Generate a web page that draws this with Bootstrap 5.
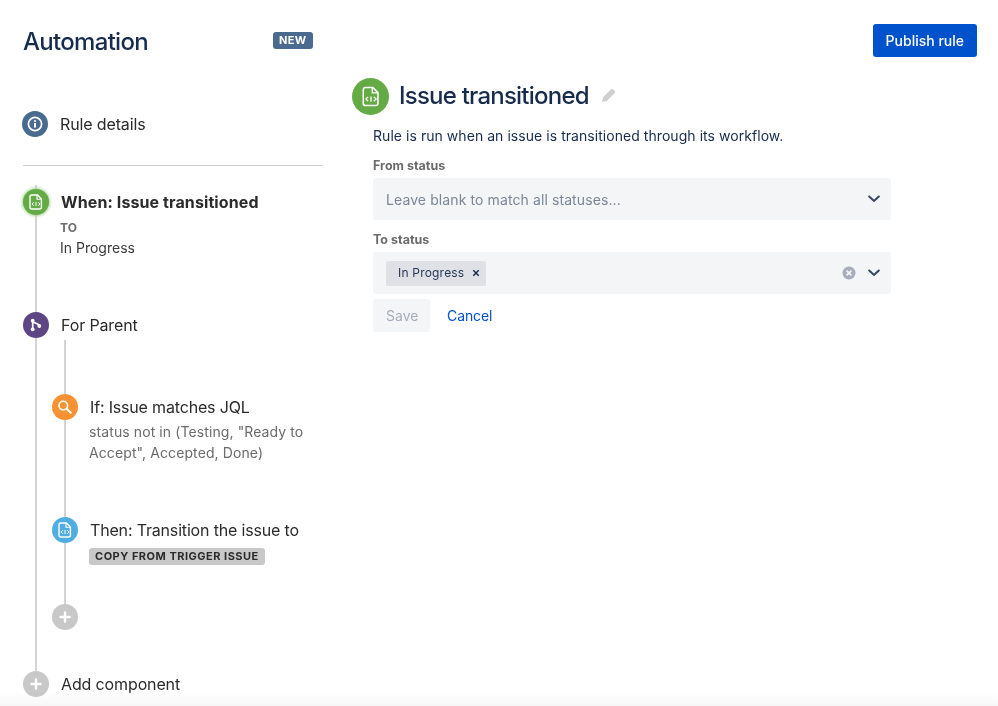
<!doctype html>
<html lang="en">
<head>
<meta charset="utf-8">
<title>Automation</title>
<link rel="stylesheet" href="https://cdn.jsdelivr.net/npm/bootstrap@5.3.0/dist/css/bootstrap.min.css">
<style>
html,body{height:706px;overflow:hidden}
body{font-family:Inter,"Noto Sans",sans-serif;color:#2b2b2b;background:#fff;font-size:14px}
.shell{padding:0 21px 0 23px}
.side{width:300px;flex:none}
.main-pane{margin-left:29px;flex:1;min-width:0}
.page-title{font-size:24px;font-weight:500;color:#172b4d;letter-spacing:-.7px;line-height:28px;margin:2px 0 0}
.new-tag{background:#4a6b8f;color:#fff;font-size:11px;font-weight:700;line-height:17px;padding:0 6.500px;border-radius:3px;letter-spacing:.3px;margin-right:10px}
.head-row{height:27px;margin-top:27px}
.publish{background:#0052cc;color:#fff;font-size:14px;font-weight:500;border:0;border-radius:3px;height:33px;padding:0 13px;margin-top:24px;flex:none}
.publish:hover{background:#0052cc;color:#fff}
.dot{width:26px;height:26px;border-radius:50%;flex:none;display:flex;align-items:center;justify-content:center;position:relative;z-index:1}
.dot svg{display:block}
.c-info{background:#4a6b8f}
.c-green{background:#65ab45;box-shadow:0 0 3px 1px #a9d398}
.c-purple{background:#5e4685}
.c-orange{background:#f79232}
.c-blue{background:#4fade3}
.c-grey{background:#c8c8c8}
.step-name{font-size:16px;line-height:20px}
.ls-a{letter-spacing:-.13px}
.ls-b{letter-spacing:-.17px}
.sub-text{font-size:14px;line-height:21px;color:#6b6b6b;letter-spacing:.1px}
.details{margin-top:57px;margin-left:-1px}
.sep{border:0;border-top:1px solid #ccc;opacity:1;margin:28px 0 23px}
.tree{position:relative}
.tree::before{content:"";position:absolute;left:12px;top:-4px;bottom:13px;width:2px;background:#d4d4d4}
.subtree{position:relative;margin-left:29px;padding-top:56px}
.subtree::before{content:"";position:absolute;left:12px;top:2px;bottom:13px;width:2px;background:#d4d4d4}
.when-meta{padding-left:37px}
.when-title{font-weight:700;margin-left:1px;letter-spacing:.1px}
.to-label{font-size:12px;font-weight:700;color:#6b6b6b;line-height:16px;margin-top:5px}
.plain-line{font-size:14px;line-height:20px;margin-top:2px;color:#3a3a3a}
.for-row{margin-top:54px}
.if-text{padding-left:37px;margin-top:1px}
.then-row{margin-top:54px}
.copy-tag{display:inline-block;background:#c8c8c8;color:#2b2b2b;font-size:11px;font-weight:700;letter-spacing:.5px;border-radius:3px;line-height:17px;padding:0 6px;margin:5px 0 0 37px}
.plus-row{margin-top:39px}
.add-row{margin-top:41px}
.rule-head{margin-top:21px}
.rule-dot{width:37px;height:37px;box-shadow:none;margin-right:10px}
.rule-title{font-size:24px;font-weight:500;color:#172b4d;letter-spacing:-.78px;line-height:34px;margin:-1px 0 0}
.pencil{margin-left:13px;margin-top:-3px}
.rule-body{padding-left:21px;width:539px}
.rule-desc{font-size:14px;line-height:20px;color:#172b4d;margin:11px 0 0;letter-spacing:.05px}
.field-label{font-size:12.500px;font-weight:700;color:#6b6b6b;line-height:16px;margin:0 0 4px}
.field-block{margin-top:12px}
.select-box{height:42px;background:#f4f5f7;border-radius:3px;padding:0 11px 0 13px}
.placeholder-text{font-size:14px;color:#7a869a;letter-spacing:.1px}
.chip{background:#dfe1e6;border-radius:2px;height:25px;font-size:12px;color:#253858;padding:0 6px 0 12px;gap:8px;letter-spacing:.2px}
.action-row{margin-top:5px}
.save-btn{background:#f4f5f7;color:#a5adba;font-size:14px;border:0;border-radius:3px;height:33px;padding:0 13px;width:57px}
.save-btn:disabled{background:#f4f5f7;color:#a5adba;opacity:1}
.cancel-btn{color:#0052cc;font-size:14px;text-decoration:none;padding:0 17px;letter-spacing:-.1px}
.floor{position:fixed;left:0;right:0;bottom:0;height:14px;background:linear-gradient(#ffffff,#f7f7f7);z-index:-1}
</style>
</head>
<body>
<div class="shell d-flex">
  <aside class="side">
    <div class="head-row d-flex align-items-center justify-content-between">
      <h1 class="page-title">Automation</h1>
      <span class="new-tag">NEW</span>
    </div>
    <div class="details d-flex align-items-center">
      <span class="dot c-info"><svg width="16" height="16" viewBox="0 0 16 16" fill="none"><circle cx="8" cy="8" r="6.600" stroke="#fff" stroke-width="1.700"/><rect x="7" y="7" width="2" height="4.600" fill="#fff"/><circle cx="8" cy="5" r="1.100" fill="#fff"/></svg></span>
      <span class="step-name ms-2 ps-1 ls-a">Rule details</span>
    </div>
    <hr class="sep">
    <div class="tree">
      <div class="d-flex align-items-center">
        <span class="dot c-green"><svg width="14" height="16" viewBox="0 0 14 16" fill="none"><path d="M2.600 1h5.900L12.400 5v8.400a1.600 1.600 0 0 1-1.600 1.600H2.600A1.600 1.600 0 0 1 1 13.400V2.600A1.600 1.600 0 0 1 2.600 1z" stroke="#fff" stroke-width="1.400"/><path d="M8 1v4.200h4.200" stroke="#fff" stroke-width="1.100"/><path d="M4.800 8.300L3 10l1.800 1.700M9.200 8.300L11 10l-1.800 1.700M7 8v4" stroke="#fff" stroke-width="1"/></svg></span>
        <span class="step-name ms-2 ps-1 when-title">When: Issue transitioned</span>
      </div>
      <div class="when-meta">
        <div class="to-label">TO</div>
        <div class="plain-line">In Progress</div>
      </div>
      <div class="d-flex align-items-center for-row">
        <span class="dot c-purple"><svg width="16" height="16" viewBox="0 0 16 16" fill="none"><path d="M4.700 3.700v8.600M4.700 3.700c0 3 6.600 2 6.600 5.300" stroke="#fff" stroke-width="1.700"/><circle cx="4.700" cy="3.700" r="1.900" fill="#fff"/><circle cx="4.700" cy="12.300" r="1.900" fill="#fff"/><circle cx="11.300" cy="9" r="1.900" fill="#fff"/></svg></span>
        <span class="step-name ms-2 ps-1 ls-a">For Parent</span>
      </div>
      <div class="subtree">
        <div class="d-flex align-items-center">
          <span class="dot c-orange"><svg width="16" height="16" viewBox="0 0 16 16" fill="none"><circle cx="6.300" cy="6.600" r="4.300" stroke="#fff" stroke-width="1.600"/><path d="M9.800 10l4 3.800" stroke="#fff" stroke-width="2" stroke-linecap="round"/></svg></span>
          <span class="step-name ms-2 ps-1 ls-b">If: Issue matches JQL</span>
        </div>
        <div class="sub-text if-text">status not in (Testing, "Ready to<br>Accept", Accepted, Done)</div>
        <div class="d-flex align-items-center then-row">
          <span class="dot c-blue"><svg width="14" height="16" viewBox="0 0 14 16" fill="none"><path d="M2.600 1h5.900L12.400 5v8.400a1.600 1.600 0 0 1-1.600 1.600H2.600A1.600 1.600 0 0 1 1 13.400V2.600A1.600 1.600 0 0 1 2.600 1z" stroke="#fff" stroke-width="1.400"/><path d="M8 1v4.200h4.200" stroke="#fff" stroke-width="1.100"/><path d="M4.800 8.300L3 10l1.800 1.700M9.200 8.300L11 10l-1.800 1.700M7 8v4" stroke="#fff" stroke-width="1"/></svg></span>
          <span class="step-name ms-2 ps-1 ls-b">Then: Transition the issue to</span>
        </div>
        <span class="copy-tag">COPY FROM TRIGGER ISSUE</span>
        <div class="plus-row">
          <span class="dot c-grey"><svg width="12" height="12" viewBox="0 0 12 12"><path d="M6 1.500v9M1.500 6h9" stroke="#fff" stroke-width="2.400" stroke-linecap="round"/></svg></span>
        </div>
      </div>
      <div class="d-flex align-items-center add-row">
        <span class="dot c-grey"><svg width="12" height="12" viewBox="0 0 12 12"><path d="M6 1.500v9M1.500 6h9" stroke="#fff" stroke-width="2.400" stroke-linecap="round"/></svg></span>
        <span class="step-name ms-2 ps-1 ls-a">Add component</span>
      </div>
    </div>
  </aside>
  <main class="main-pane">
    <div class="d-flex justify-content-end">
      <button type="button" class="btn publish">Publish rule</button>
    </div>
    <div class="d-flex align-items-center rule-head">
      <span class="dot c-green rule-dot"><svg width="18" height="21" viewBox="0 0 14 16" fill="none"><path d="M2.600 1h5.900L12.400 5v8.400a1.600 1.600 0 0 1-1.600 1.600H2.600A1.600 1.600 0 0 1 1 13.400V2.600A1.600 1.600 0 0 1 2.600 1z" stroke="#fff" stroke-width="1.200"/><path d="M8 1v4.200h4.200" stroke="#fff" stroke-width="1"/><path d="M4.800 8.300L3 10l1.800 1.700M9.200 8.300L11 10l-1.800 1.700M7 8v4" stroke="#fff" stroke-width="1"/></svg></span>
      <h2 class="rule-title">Issue transitioned</h2>
      <svg class="pencil" width="14" height="14" viewBox="0 0 14 14"><path d="M0 14l1-4.800 8-8a1.400 1.400 0 0 1 2 0l1.800 1.800a1.400 1.400 0 0 1 0 2l-8 8z" fill="#cfcfcf"/></svg>
    </div>
    <div class="rule-body">
      <p class="rule-desc">Rule is run when an issue is transitioned through its workflow.</p>
      <div class="field-block">
        <div class="field-label">From status</div>
        <div class="select-box d-flex align-items-center justify-content-between">
          <span class="placeholder-text">Leave blank to match all statuses...</span>
          <svg width="12" height="8" viewBox="0 0 12 8" fill="none"><path d="M1.200 1.500L6 6l4.800-4.500" stroke="#344563" stroke-width="2" stroke-linecap="round"/></svg>
        </div>
      </div>
      <div class="field-block">
        <div class="field-label">To status</div>
        <div class="select-box d-flex align-items-center justify-content-between">
          <span class="chip d-inline-flex align-items-center">In Progress<svg width="8" height="8" viewBox="0 0 8 8"><path d="M1.300 1.300l5.400 5.400M6.700 1.300L1.300 6.700" stroke="#172b4d" stroke-width="1.500"/></svg></span>
          <span class="d-flex align-items-center gap-2">
            <svg width="14" height="14" viewBox="0 0 14 14"><circle cx="7" cy="7" r="6.500" fill="#a5adba"/><path d="M4.600 4.600l4.800 4.800M9.400 4.600L4.600 9.400" stroke="#f4f5f7" stroke-width="1.700"/></svg>
            <svg class="ms-1" width="12" height="8" viewBox="0 0 12 8" fill="none"><path d="M1.200 1.500L6 6l4.800-4.500" stroke="#344563" stroke-width="2" stroke-linecap="round"/></svg>
          </span>
        </div>
      </div>
      <div class="d-flex align-items-center action-row">
        <button type="button" class="btn save-btn" disabled>Save</button>
        <a href="#" class="cancel-btn">Cancel</a>
      </div>
    </div>
  </main>
</div>
<div class="floor"></div>
</body>
</html>
